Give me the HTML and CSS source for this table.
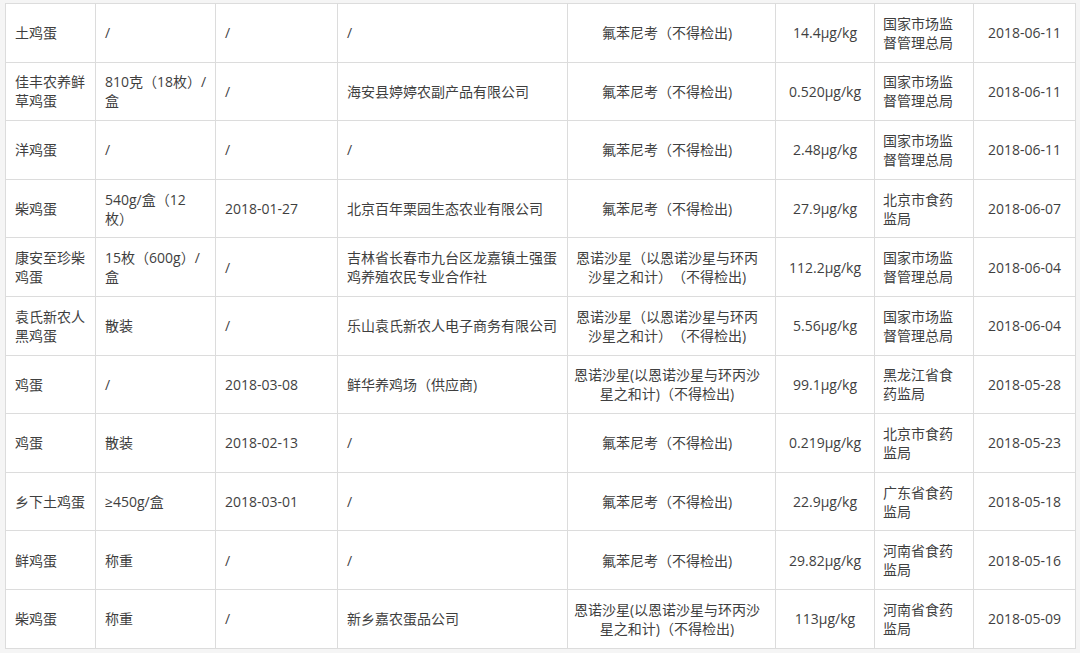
FILE: index.html
```html
<!DOCTYPE html>
<html lang="zh-CN">
<head>
<meta charset="utf-8">
<title>鸡蛋抽检结果</title>
<link rel="stylesheet" href="styles.css">
</head>
<body>
<table class="report">
  <colgroup>
    <col class="c-name"><col class="c-spec"><col class="c-date"><col class="c-maker">
    <col class="c-item"><col class="c-value"><col class="c-agency"><col class="c-pub">
  </colgroup>
  <tbody>
    <tr><td>土鸡蛋</td><td>/</td><td>/</td><td>/</td><td class="it">氟苯尼考（不得检出)</td><td class="ctr">14.4μg/kg</td><td class="ag">国家市场监督管理总局</td><td class="ctr">2018-06-11</td></tr>
    <tr><td>佳丰农养鲜草鸡蛋</td><td>810克（18枚）/盒</td><td>/</td><td>海安县婷婷农副产品有限公司</td><td class="it">氟苯尼考（不得检出)</td><td class="ctr">0.520μg/kg</td><td class="ag">国家市场监督管理总局</td><td class="ctr">2018-06-11</td></tr>
    <tr><td>洋鸡蛋</td><td>/</td><td>/</td><td>/</td><td class="it">氟苯尼考（不得检出)</td><td class="ctr">2.48μg/kg</td><td class="ag">国家市场监督管理总局</td><td class="ctr">2018-06-11</td></tr>
    <tr><td>柴鸡蛋</td><td>540g/盒（12枚）</td><td>2018-01-27</td><td>北京百年栗园生态农业有限公司</td><td class="it">氟苯尼考（不得检出)</td><td class="ctr">27.9μg/kg</td><td class="ag">北京市食药监局</td><td class="ctr">2018-06-07</td></tr>
    <tr><td>康安至珍柴鸡蛋</td><td>15枚（600g）/盒</td><td>/</td><td>吉林省长春市九台区龙嘉镇土强蛋鸡养殖农民专业合作社</td><td class="it">恩诺沙星（以恩诺沙星与环丙沙星之和计）（不得检出)</td><td class="ctr">112.2μg/kg</td><td class="ag">国家市场监督管理总局</td><td class="ctr">2018-06-04</td></tr>
    <tr><td>袁氏新农人黑鸡蛋</td><td>散装</td><td>/</td><td>乐山袁氏新农人电子商务有限公司</td><td class="it">恩诺沙星（以恩诺沙星与环丙沙星之和计）（不得检出)</td><td class="ctr">5.56μg/kg</td><td class="ag">国家市场监督管理总局</td><td class="ctr">2018-06-04</td></tr>
    <tr><td>鸡蛋</td><td>/</td><td>2018-03-08</td><td>鲜华养鸡场（供应商)</td><td class="it">恩诺沙星(以恩诺沙星与环丙沙星之和计)（不得检出)</td><td class="ctr">99.1μg/kg</td><td class="ag">黑龙江省食药监局</td><td class="ctr">2018-05-28</td></tr>
    <tr><td>鸡蛋</td><td>散装</td><td>2018-02-13</td><td>/</td><td class="it">氟苯尼考（不得检出)</td><td class="ctr">0.219μg/kg</td><td class="ag">北京市食药监局</td><td class="ctr">2018-05-23</td></tr>
    <tr><td>乡下土鸡蛋</td><td>≥450g/盒</td><td>2018-03-01</td><td>/</td><td class="it">氟苯尼考（不得检出)</td><td class="ctr">22.9μg/kg</td><td class="ag">广东省食药监局</td><td class="ctr">2018-05-18</td></tr>
    <tr><td>鲜鸡蛋</td><td>称重</td><td>/</td><td>/</td><td class="it">氟苯尼考（不得检出)</td><td class="ctr">29.82μg/kg</td><td class="ag">河南省食药监局</td><td class="ctr">2018-05-16</td></tr>
    <tr><td>柴鸡蛋</td><td>称重</td><td>/</td><td>新乡嘉农蛋品公司</td><td class="it">恩诺沙星(以恩诺沙星与环丙沙星之和计)（不得检出)</td><td class="ctr">113μg/kg</td><td class="ag">河南省食药监局</td><td class="ctr">2018-05-09</td></tr>
  </tbody>
</table>
</body>
</html>
```
FILE: styles.css
```css
html, body {
  margin: 0;
  padding: 0;
  background: #f5f5f5;
}
body {
  padding: 3px 0 0 5px;
  font-family: "Open Sans", "Noto Sans CJK SC", sans-serif;
  font-size: 14px;
  color: #3f3f3f;
}
.report {
  border-collapse: collapse;
  table-layout: fixed;
  width: 1070px;
  background: #fff;
  text-spacing-trim: space-all;
}
.c-name { width: 90px; }
.c-spec { width: 120px; }
.c-date { width: 122px; }
.c-maker { width: 230px; }
.c-item { width: 208px; }
.c-value { width: 99px; }
.c-agency { width: 99px; }
.c-pub { width: 102px; }
.report td {
  border: 1px solid #dcdcdc;
  height: 58.6px;
  box-sizing: border-box;
  padding: 0 8px 0 9px;
  vertical-align: middle;
  line-height: 19px;
  text-align: left;
  word-break: normal;
}
.report td.ctr {
  text-align: center;
  padding: 0 6px;
}
.report td.it {
  text-align: center;
  padding: 0 13px 0 4px;
}
.report td.ag {
  padding: 0 10px 0 8px;
}
```
